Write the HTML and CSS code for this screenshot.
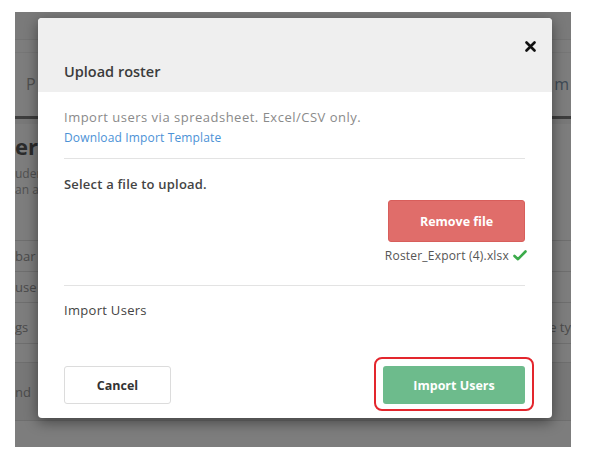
FILE: index.html
```html
<!DOCTYPE html>
<html>
<head>
<meta charset="utf-8">
<link rel="stylesheet" href="styles.css">
</head>
<body>
<div class="stage">
  <div class="backdrop">
    <div class="page">
      <div class="pg-top"></div>
      <div class="pg-nav"><span class="pg-nav-l">P</span><span class="pg-nav-r">m</span></div>
      <div class="pg-bar"></div>
      <div class="pg-title">ers</div>
      <div class="pg-sub">uder<br>an a</div>
      <div class="pg-row">bar</div>
      <div class="pg-row">use</div>
      <div class="pg-row pg-row-tall"><span>gs</span><span>e ty</span></div>
      <div class="pg-row pg-row-short"></div>
      <div class="pg-row pg-row-tall2">nd</div>
      <div class="pg-row pg-row-short"></div>
    </div>
    <div class="modal">
      <div class="modal-head">
        <h2 class="modal-title">Upload roster</h2>
        <button class="close" aria-label="Close">
          <svg width="11" height="11" viewBox="0 0 11 11"><path d="M1.5 1.5 L9.5 9.5 M9.5 1.5 L1.5 9.5" stroke="#111" stroke-width="2.6" stroke-linecap="round"/></svg>
        </button>
      </div>
      <div class="modal-body">
        <p class="intro">Import users via spreadsheet. Excel/CSV only.</p>
        <a class="template" href="#">Download Import Template</a>
        <div class="section upload">
          <div class="label">Select a file to upload.</div>
          <div class="file-side">
            <button class="btn btn-remove">Remove file</button>
            <div class="filename">Roster_Export (4).xlsx
              <svg width="14" height="11" viewBox="0 0 14 11"><path d="M1.5 6 L5 9.2 L12.5 1.5" fill="none" stroke="#3bab4a" stroke-width="2.6" stroke-linecap="round" stroke-linejoin="round"/></svg>
            </div>
          </div>
        </div>
        <div class="section import">
          <div class="label">Import Users</div>
        </div>
        <div class="footer">
          <button class="btn btn-cancel">Cancel</button>
          <div class="highlight"><button class="btn btn-import">Import Users</button></div>
        </div>
      </div>
    </div>
  </div>
</div>
</body>
</html>
```

FILE: styles.css
```css
* { box-sizing: border-box; }
html, body { margin: 0; padding: 0; background: #fff; }
body { font-family: "Open Sans", "Noto Sans", sans-serif; width: 589px; height: 463px; overflow: hidden; }

.stage { padding: 12px 18px 16px 15px; }
.backdrop {
  position: relative;
  width: 556px;
  height: 435px;
  background: #7d7d7d;
  overflow: hidden;
}

/* dimmed page under the modal */
.page { color: #555; font-size: 13px; }
.pg-top { height: 28px; background: #7a7a7a; border-bottom: 1px solid #737373; }
.pg-nav {
  height: 64px;
  border-top: 1px solid #767676;
  margin-top: 12px;
  display: flex;
  justify-content: space-between;
  align-items: flex-start;
  padding: 20px 2px 0 11px;
  font-size: 16px;
}
.pg-nav-l { color: #4f4f4f; }
.pg-nav-r { color: #3e4a55; }
.pg-bar { height: 8px; background: #3d3d3d; border-bottom: 5px solid #787878; }
.pg-title { font-size: 22px; font-weight: 700; color: #2b2b2b; padding: 8px 0 0 0; line-height: 28px; }
.pg-sub { font-size: 12px; line-height: 16px; color: #505050; padding: 6px 0 0 0; height: 80px; }
.pg-row {
  border-top: 1px solid #6e6e6e;
  height: 31px;
  padding: 6px 0 0 0;
  font-size: 13px;
  color: #4a4a4a;
  display: flex;
  justify-content: space-between;
}
.pg-row-tall { height: 41px; padding-top: 15px; }
.pg-row-short { height: 19px; }
.pg-row-tall2 { height: 58px; padding-top: 20px; background: #777; }

/* modal */
.modal {
  position: absolute;
  left: 23px;
  top: 6px;
  width: 514px;
  height: 400px;
  background: #fff;
  border-radius: 4px;
  box-shadow: 0 4px 14px rgba(0,0,0,0.45);
  overflow: hidden;
  color: #3a3a3a;
}
.modal-head {
  background: #efefef;
  height: 74px;
  position: relative;
  padding: 0 26px;
  display: flex;
  align-items: flex-end;
}
.modal-title {
  margin: 0 0 11px 0;
  font-size: 14.5px;
  font-weight: 600;
  color: #3b3b3b;
}
.close {
  position: absolute;
  right: 16px;
  top: 23px;
  border: 0;
  background: none;
  padding: 0;
  line-height: 0;
}
.modal-body { padding: 16px 27px 0 26px; }
.intro { margin: 0; font-size: 13px; letter-spacing: 0.5px; color: #8a8a8a; line-height: 18px; }
.template { display: block; font-size: 12px; letter-spacing: 0.15px; color: #4c92d6; text-decoration: none; line-height: 18px; margin-top: 3px; }
.section { border-top: 1px solid #e3e3e3; }
.template + .section { margin-top: 11px; }
.label { font-size: 13px; font-weight: 600; letter-spacing: 0.2px; color: #444; line-height: 18px; }
.upload { display: flex; justify-content: space-between; height: 127px; padding-top: 16px; }
.file-side { display: flex; flex-direction: column; align-items: flex-end; padding-top: 25px; }
.btn {
  font-family: inherit;
  font-size: 12.5px;
  font-weight: 700;
  border-radius: 3px;
  cursor: pointer;
}
.btn-remove {
  width: 137px;
  height: 42px;
  background: #e06d6a;
  color: #fff;
  border: 1px solid #d85e5b;
}
.filename {
  font-size: 12px;
  letter-spacing: 0.2px;
  color: #555;
  margin-top: 5px;
  display: flex;
  align-items: center;
  gap: 4px;
  margin-right: -2px;
}
.import { padding-top: 15px; height: 72px; }
.import .label { font-weight: 400; letter-spacing: 0.3px; }
.footer { display: flex; justify-content: space-between; align-items: flex-start; margin-right: -9px; }
.btn-cancel {
  margin-top: 9px;
  width: 107px;
  height: 38px;
  background: #fff;
  color: #333;
  border: 1px solid #dcdcdc;
}
.highlight {
  border: 2px solid #e3262d;
  border-radius: 8px;
  padding: 7px 7px 5px 7px;
}
.btn-import {
  display: block;
  width: 142px;
  height: 38px;
  background: #6dbb8c;
  color: #fff;
  border: 0;
}
```
